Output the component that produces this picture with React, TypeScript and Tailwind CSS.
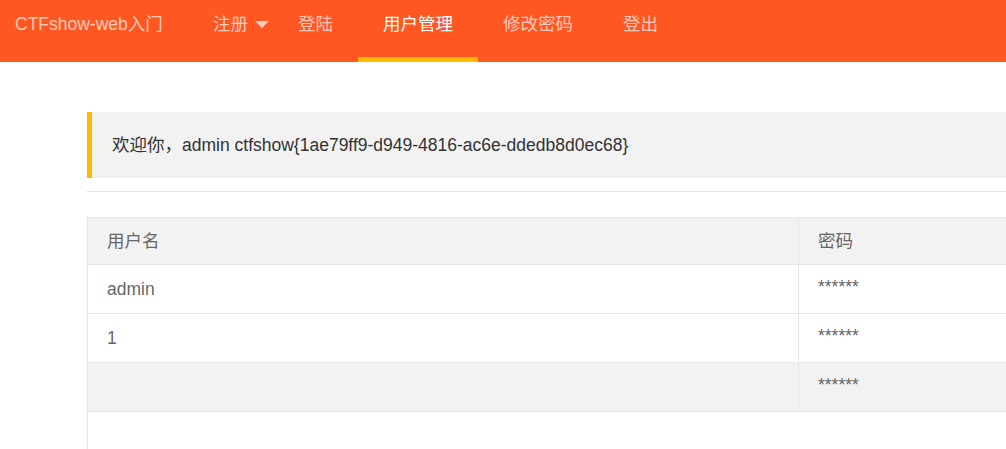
import React from 'react';

const font = { fontFamily: '"Liberation Sans", "Noto Sans CJK SC", sans-serif' };

const navItems = [
  { label: '注册', dropdown: true },
  { label: '登陆' },
  { label: '用户管理', active: true },
  { label: '修改密码' },
  { label: '登出' },
];

const rows = [
  { name: 'admin', pass: '******' },
  { name: '1', pass: '******' },
  { name: '', pass: '******', striped: true },
];

export default function App() {
  return (
    <div className="w-[1006px] h-[449px] overflow-hidden bg-white text-[17.5px]" style={font}>
      {/* top nav */}
      <div className="h-[62px] bg-[#FF5722] flex items-start">
        <div className="pl-[15px] w-[188px] leading-[49px] text-white/70">CTFshow-web入门</div>
        {navItems.map((item) => (
          <div
            key={item.label}
            className={
              'relative h-[62px] flex items-start leading-[49px] ' +
              (item.dropdown ? 'pl-[25px] pr-[4px] ' : 'px-[25px] ') +
              (item.active ? 'text-white' : 'text-white/70')
            }
          >
            <span>{item.label}</span>
            {item.dropdown && (
              <svg className="ml-[7px] mt-[21px]" width="14" height="8" viewBox="0 0 14 8">
                <polygon points="0,0 14,0 7,7" fill="rgba(255,255,255,0.7)" />
              </svg>
            )}
            {item.active && <div className="absolute left-0 right-0 bottom-0 h-[5px] bg-[#FFB800]" />}
          </div>
        ))}
      </div>

      {/* content */}
      <div className="ml-[87px] w-[1000px] pt-[50px]">
        <div className="h-[66px] bg-[#f2f2f2] border-l-[5px] border-[#FFB800] pl-[20px] flex items-center text-[#333]">
          欢迎你，admin ctfshow&#123;1ae79ff9-d949-4816-ac6e-ddedb8d0ec68&#125;
        </div>
        <div className="mt-[13px] h-px bg-[#e6e6e6]" />

        <div className="mt-[25px] border-l border-t border-[#e6e6e6] text-[#666]">
          <div className="flex h-[47px] bg-[#f2f2f2] border-b border-[#e6e6e6]">
            <div className="w-[711px] pl-[19px] flex items-center border-r border-[#e6e6e6]">用户名</div>
            <div className="flex-1 pl-[19px] flex items-center">密码</div>
          </div>
          {rows.map((r, i) => (
            <div
              key={i}
              className={'flex h-[49px] border-b border-[#e6e6e6] ' + (r.striped ? 'bg-[#f2f2f2]' : 'bg-white')}
            >
              <div className="w-[711px] pl-[19px] flex items-center border-r border-[#e6e6e6]">{r.name}</div>
              <div className="flex-1 pl-[19px] flex items-center pb-[3px]">{r.pass}</div>
            </div>
          ))}
          <div className="h-[60px]" />
        </div>
      </div>
    </div>
  );
}
